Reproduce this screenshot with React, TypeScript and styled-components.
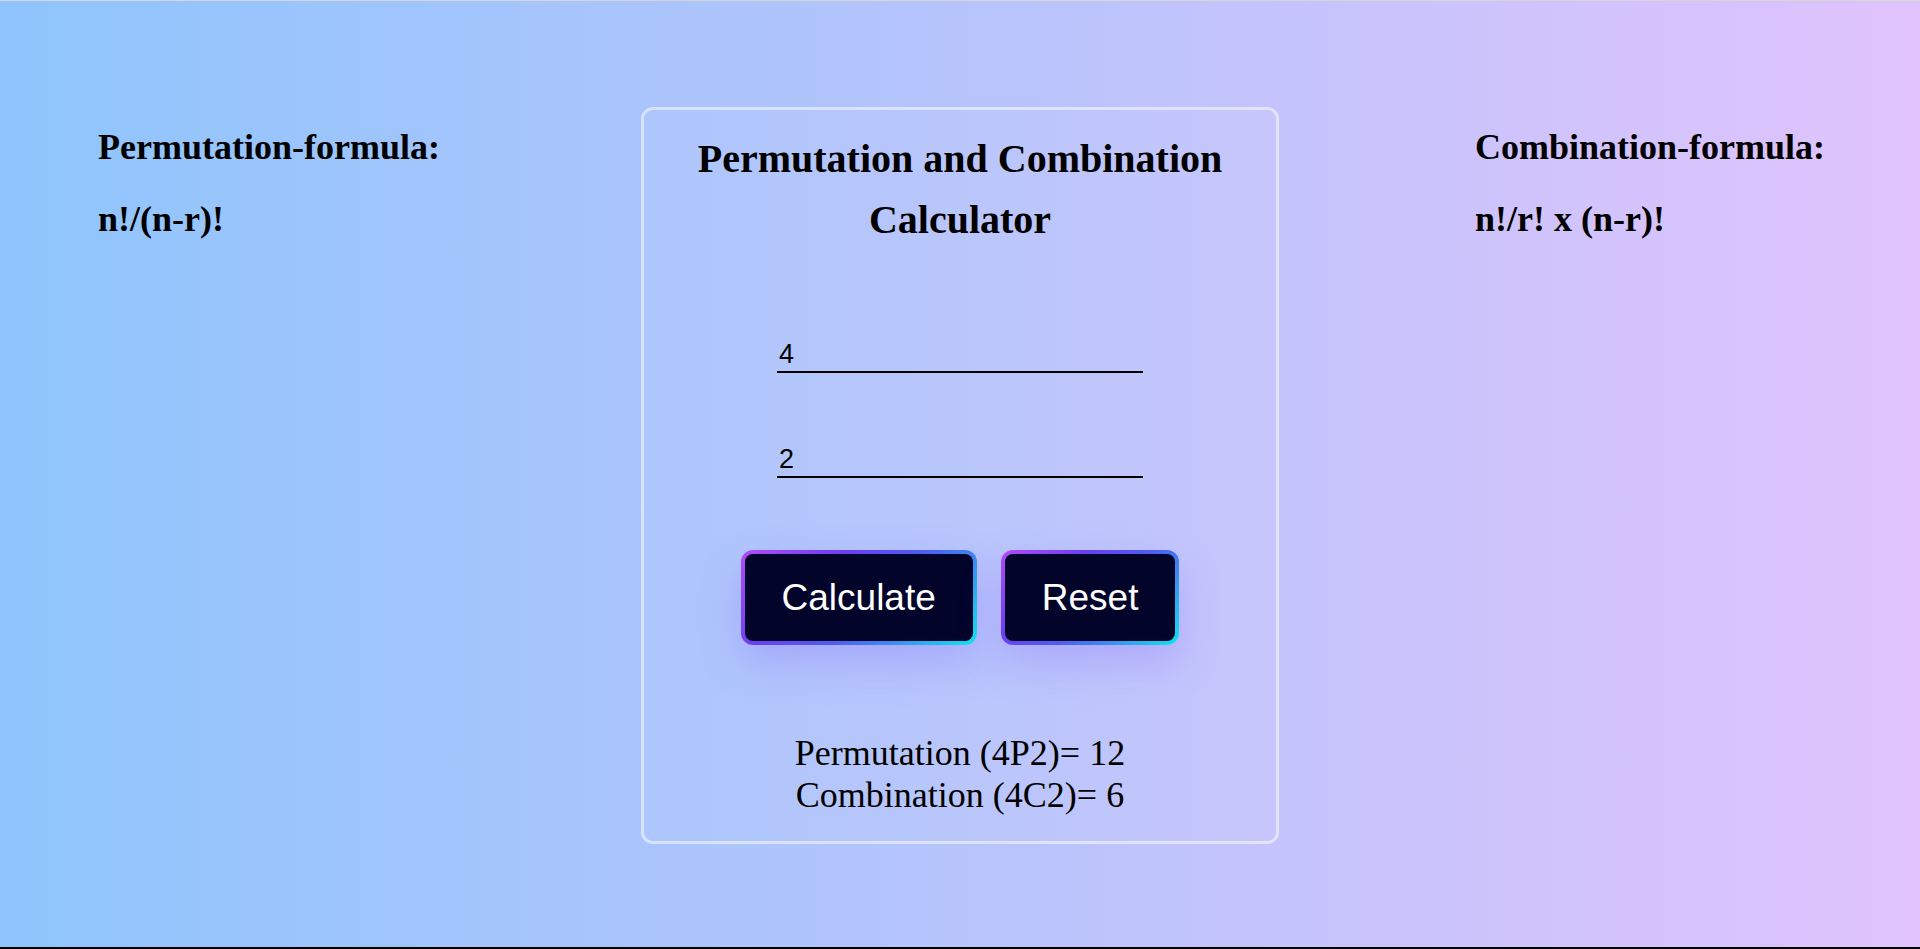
import React, { useState } from "react";
import styled, { createGlobalStyle } from "styled-components";

const GlobalStyle = createGlobalStyle`
  html, body {
    margin: 0;
    padding: 0;
    background: #000;
  }
  * {
    box-sizing: border-box;
  }
`;

const Page = styled.div`
  height: 949px;
  border-top: 1px solid #d6d6d6;
  border-bottom: 2px solid #000;
  background: linear-gradient(90deg, #8ec5fc 0%, #e0c3fc 100%);
  display: flex;
  justify-content: space-around;
  align-items: flex-start;
  padding-top: 106px;
  font-family: "Liberation Serif", "Times New Roman", serif;
  color: #000;
`;

const FormulaColumn = styled.div`
  width: 347px;
  padding-top: 19px;
`;

const FormulaText = styled.h2`
  margin: 0 0 30px;
  font-size: 36px;
  font-weight: 700;
  line-height: normal;
  white-space: nowrap;
`;

const Card = styled.div`
  width: 638px;
  border: 3px solid rgba(255, 255, 255, 0.5);
  border-radius: 12px;
  background: rgba(255, 255, 255, 0.04);
  padding: 18px 30px 25px;
  display: flex;
  flex-direction: column;
  align-items: center;
`;

const Title = styled.h1`
  margin: 0;
  font-size: 40px;
  font-weight: 700;
  line-height: 61px;
  text-align: center;
`;

const NumberInput = styled.input<{ $gap: number }>`
  margin-top: ${(p) => p.$gap}px;
  width: 366px;
  height: 35px;
  padding: 0 2px;
  border: none;
  border-bottom: 2px solid #000;
  background: transparent;
  font-family: "Liberation Sans", Arial, sans-serif;
  font-size: 27px;
  color: #000;
  outline: none;
`;

const ButtonRow = styled.div`
  margin-top: 72px;
  display: flex;
  gap: 24px;
`;

const GlowButton = styled.button`
  height: 95px;
  padding: 0 37px;
  border: 4px solid transparent;
  border-radius: 12px;
  background:
    linear-gradient(#03042a, #03042a) padding-box,
    linear-gradient(135deg, #b24cf6 0%, #6b3ff0 32%, #4f5cef 55%, #3f86f0 72%, #0ee6ef 100%) border-box;
  color: #fff;
  font-family: "Liberation Sans", Arial, sans-serif;
  font-size: 37px;
  cursor: pointer;
  box-shadow: 0 18px 40px rgba(125, 95, 250, 0.28);
`;

const Results = styled.div`
  margin-top: 87px;
  font-size: 36px;
  line-height: normal;
  text-align: center;
`;

const fact = (n: number): number => (n <= 1 ? 1 : n * fact(n - 1));

export default function App() {
  const [n, setN] = useState("4");
  const [r, setR] = useState("2");
  const [res, setRes] = useState<{ n: number; r: number } | null>({ n: 4, r: 2 });

  const calc = () => {
    const nn = parseInt(n, 10);
    const rr = parseInt(r, 10);
    if (!isNaN(nn) && !isNaN(rr) && rr <= nn && nn >= 0 && rr >= 0) setRes({ n: nn, r: rr });
  };
  const reset = () => {
    setN("");
    setR("");
    setRes(null);
  };

  return (
    <>
      <GlobalStyle />
      <Page>
        <FormulaColumn>
          <FormulaText>Permutation-formula:</FormulaText>
          <FormulaText>n!/(n-r)!</FormulaText>
        </FormulaColumn>
        <Card>
          <Title>Permutation and Combination Calculator</Title>
          <NumberInput $gap={88} value={n} onChange={(e) => setN(e.target.value)} />
          <NumberInput $gap={70} value={r} onChange={(e) => setR(e.target.value)} />
          <ButtonRow>
            <GlowButton onClick={calc}>Calculate</GlowButton>
            <GlowButton onClick={reset}>Reset</GlowButton>
          </ButtonRow>
          <Results>
            {res ? (
              <>
                <div>
                  Permutation ({res.n}P{res.r})= {fact(res.n) / fact(res.n - res.r)}
                </div>
                <div>
                  Combination ({res.n}C{res.r})= {fact(res.n) / (fact(res.r) * fact(res.n - res.r))}
                </div>
              </>
            ) : (
              <>
                <div>&nbsp;</div>
                <div>&nbsp;</div>
              </>
            )}
          </Results>
        </Card>
        <FormulaColumn>
          <FormulaText>Combination-formula:</FormulaText>
          <FormulaText>n!/r! x (n-r)!</FormulaText>
        </FormulaColumn>
      </Page>
    </>
  );
}
